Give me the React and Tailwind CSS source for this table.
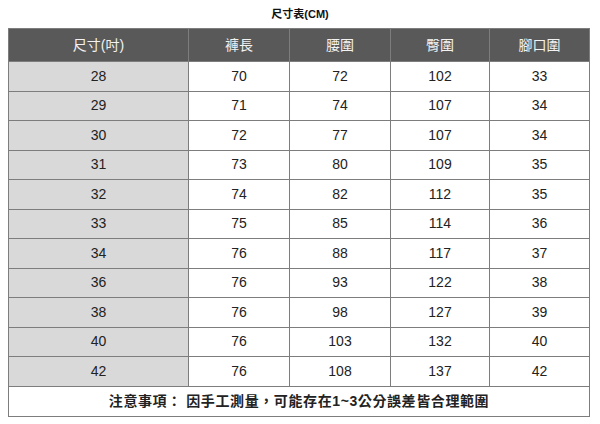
import React from 'react'

const headers = ['尺寸(吋)', '褲長', '腰圍', '臀圍', '腳口圍']
const rows = [
  [28, 70, 72, 102, 33],
  [29, 71, 74, 107, 34],
  [30, 72, 77, 107, 34],
  [31, 73, 80, 109, 35],
  [32, 74, 82, 112, 35],
  [33, 75, 85, 114, 36],
  [34, 76, 88, 117, 37],
  [36, 76, 93, 122, 38],
  [38, 76, 98, 127, 39],
  [40, 76, 103, 132, 40],
  [42, 76, 108, 137, 42],
]

const App = () => {
  return (
    <div className="w-[600px] h-[424px] bg-white font-['Liberation_Sans','Noto_Sans_CJK_TC',sans-serif] text-[#222]">
      <div className="h-[28px] flex items-center justify-center text-[11px] font-bold text-[#111]">
        尺寸表(CM)
      </div>
      <div className="ml-[8px] w-[582px] border border-[#7d7d7d] bg-[#7d7d7d] grid grid-cols-[179px_100px_100px_98px_1fr] gap-px">
        {headers.map((h) => (
          <div key={h} className="h-[32px] bg-[#595959] text-[#f2f2f2] text-[14px] flex items-center justify-center">
            {h}
          </div>
        ))}
        {rows.map((r) =>
          r.map((v, i) => (
            <div
              key={r[0] + '-' + i}
              className={
                'h-[28.5px] flex items-center justify-center text-[14px] ' +
                (i === 0 ? 'bg-[#d9d9d9]' : 'bg-white')
              }
            >
              {v}
            </div>
          ))
        )}
        <div className="col-span-5 h-[29px] bg-white flex items-center justify-center text-[14px] font-bold tracking-[0.6px] text-[#222]">
          注意事項：&nbsp;因手工測量，可能存在1~3公分誤差皆合理範圍
        </div>
      </div>
    </div>
  )
}

export default App
